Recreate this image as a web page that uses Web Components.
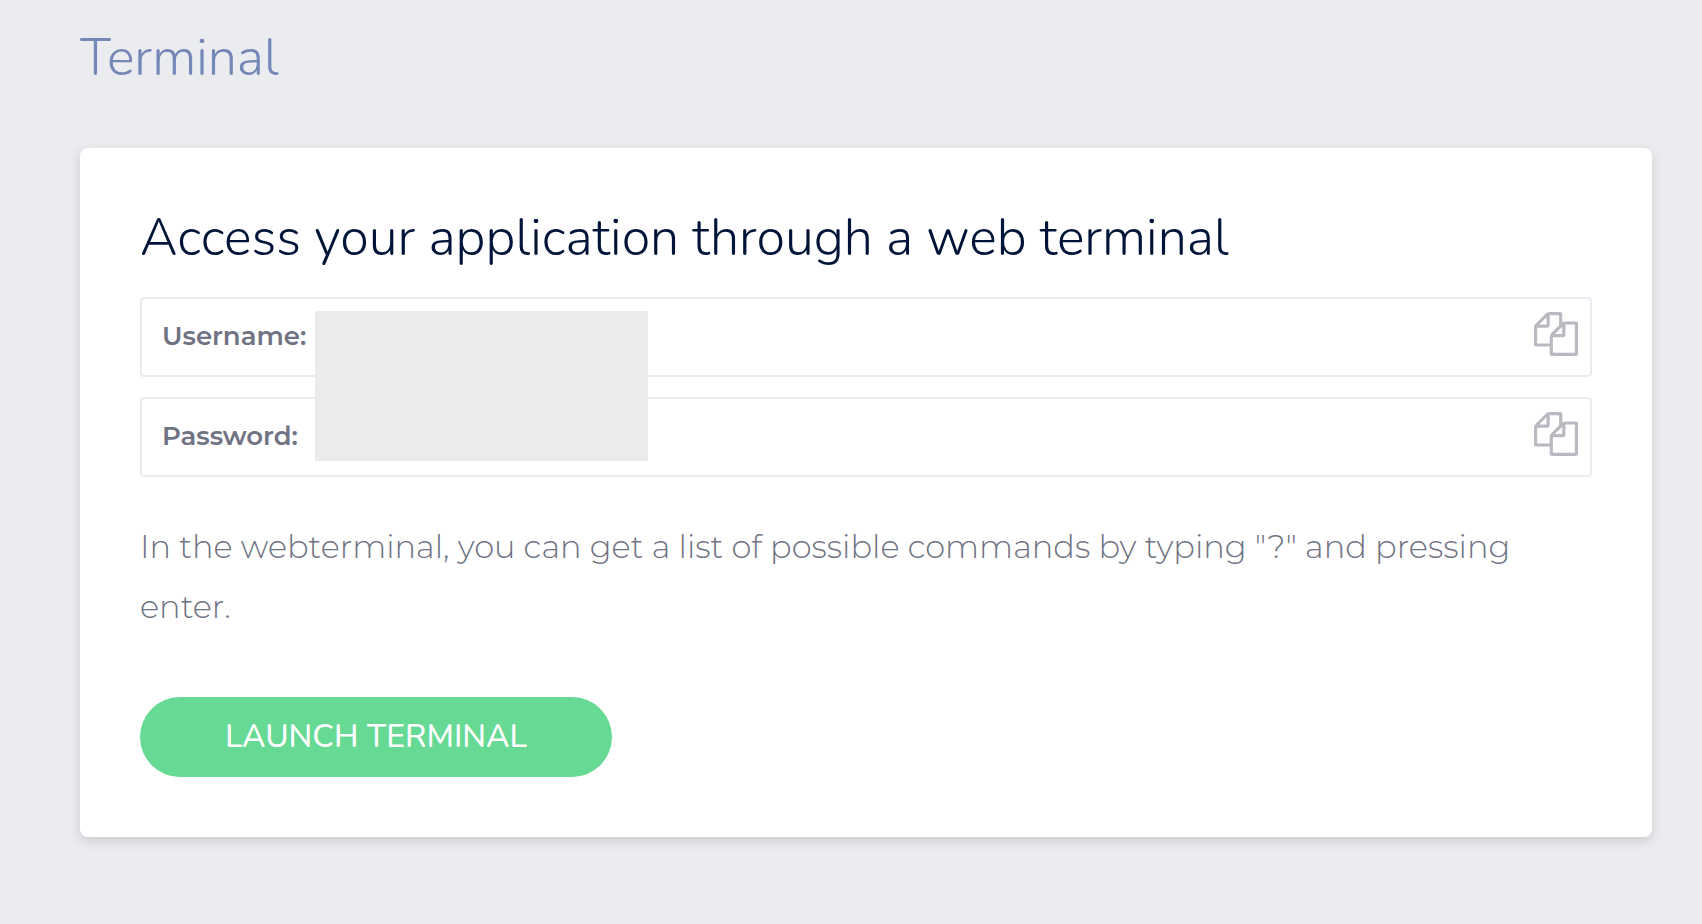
<!DOCTYPE html>
<html lang="en">
<head>
<meta charset="UTF-8">
<meta name="viewport" content="width=device-width, initial-scale=1.0">
<title>Terminal</title>
<style>
    body {
        margin: 0;
        background: #ebecf0;
        color: #6f7383;
        font-family: Montserrat, Inter, sans-serif;
        --heading-font: Nunito, "Open Sans", sans-serif;
        --border: #ebebf2;
    }
</style>
</head>
<body>
<terminal-page heading="Terminal">
    <terminal-card heading="Access your application through a web terminal">
        <credential-list>
            <credential-field label="Username:"></credential-field>
            <credential-field label="Password:"></credential-field>
        </credential-list>
        <help-text>In the webterminal, you can get a list of possible commands by typing "?" and pressing enter.</help-text>
        <launch-button>LAUNCH TERMINAL</launch-button>
    </terminal-card>
</terminal-page>

<script>
class TerminalPage extends HTMLElement {
    constructor() {
        super();
        this.attachShadow({ mode: 'open' });
    }

    connectedCallback() {
        this.shadowRoot.innerHTML = `
            <style>
                :host { display: block; padding: 28px 50px 60px 80px; }
                h1 {
                    margin: 0 0 60px;
                    font: 300 52px/60px var(--heading-font);
                    color: #7587b6;
                }
            </style>
            <h1>${this.getAttribute('heading')}</h1>
            <main><slot></slot></main>
        `;
    }
}

class TerminalCard extends HTMLElement {
    constructor() {
        super();
        this.attachShadow({ mode: 'open' });
    }

    connectedCallback() {
        this.shadowRoot.innerHTML = `
            <style>
                :host {
                    display: block;
                    padding: 60px;
                    background: #fff;
                    border-radius: 8px;
                    box-shadow: 0 4px 12px rgba(0,0,0,0.14);
                }
                h2 {
                    margin: 0 0 29px;
                    font: 300 52px/60px var(--heading-font);
                    color: #001338;
                }
            </style>
            <h2>${this.getAttribute('heading')}</h2>
            <slot></slot>
        `;
    }
}

class CredentialList extends HTMLElement {
    constructor() {
        super();
        this.attachShadow({ mode: 'open' });
    }

    connectedCallback() {
        this.shadowRoot.innerHTML = `
            <style>
                :host {
                    position: relative;
                    display: flex;
                    flex-direction: column;
                    gap: 20px;
                }
                /* grey block that hides both values */
                .mask {
                    position: absolute;
                    top: 14px;
                    left: 175px;
                    width: 333px;
                    height: 150px;
                    background: #ebebeb;
                }
            </style>
            <slot></slot>
            <div class="mask"></div>
        `;
    }
}

class CredentialField extends HTMLElement {
    constructor() {
        super();
        this.attachShadow({ mode: 'open' });
    }

    connectedCallback() {
        this.shadowRoot.innerHTML = `
            <style>
                :host {
                    display: flex;
                    align-items: center;
                    gap: 8px;
                    height: 80px;
                    box-sizing: border-box;
                    padding: 0 12px 0 20px;
                    border: 2px solid var(--border);
                    border-radius: 4px;
                }
                label { padding-bottom: 2px; font-size: 26px; font-weight: 600; }
                input {
                    flex: 1;
                    min-width: 0;
                    padding: 0;
                    border: 0;
                    outline: 0;
                    background: none;
                    color: inherit;
                    font: 300 26px/40px Montserrat, Inter, sans-serif;
                }
                button {
                    padding: 0 0 6px;
                    border: 0;
                    background: none;
                    color: #b8b9c1;
                    cursor: pointer;
                }
                svg { display: block; width: 44px; height: 44px; fill: currentColor; }
            </style>
            <label for="value">${this.getAttribute('label')}</label>
            <input id="value" type="text" readonly>
            <button type="button" aria-label="Copy">
                <svg viewBox="0 0 1792 1792" aria-hidden="true"><path d="M1696 384q40 0 68 28t28 68v1216q0 40-28 68t-68 28h-960q-40 0-68-28t-28-68v-288h-544q-40 0-68-28t-28-68v-672q0-40 20-88t48-76l408-408q28-28 76-48t88-20h416q40 0 68 28t28 68v328q68-40 128-40h416zm-544 213l-299 299h299v-299zm-640-384l-299 299h299v-299zm196 647l316-316v-416h-384v416q0 40-28 68t-68 28h-416v640h512v-256q0-40 20-88t48-76zm956 804v-1152h-384v416q0 40-28 68t-68 28h-416v640h896z"/></svg>
            </button>
        `;
    }
}

class HelpText extends HTMLElement {
    constructor() {
        super();
        this.attachShadow({ mode: 'open' });
    }

    connectedCallback() {
        this.shadowRoot.innerHTML = `
            <style>
                :host { display: block; }
                p { margin: 40px 0 60px; font-size: 32px; font-weight: 300; line-height: 60px; }
            </style>
            <p><slot></slot></p>
        `;
    }
}

class LaunchButton extends HTMLElement {
    constructor() {
        super();
        this.attachShadow({ mode: 'open' });
    }

    connectedCallback() {
        this.shadowRoot.innerHTML = `
            <style>
                :host { display: block; }
                button {
                    display: block;
                    height: 80px;
                    padding: 0 85px;
                    border: 0;
                    border-radius: 40px;
                    background: #66d994;
                    color: #fff;
                    font: 500 32px/44px var(--heading-font);
                    cursor: pointer;
                }
                button:hover { background: #58cf88; }
            </style>
            <button type="button"><slot></slot></button>
        `;
    }
}

customElements.define('terminal-page', TerminalPage);
customElements.define('terminal-card', TerminalCard);
customElements.define('credential-list', CredentialList);
customElements.define('credential-field', CredentialField);
customElements.define('help-text', HelpText);
customElements.define('launch-button', LaunchButton);
</script>
</body>
</html>
